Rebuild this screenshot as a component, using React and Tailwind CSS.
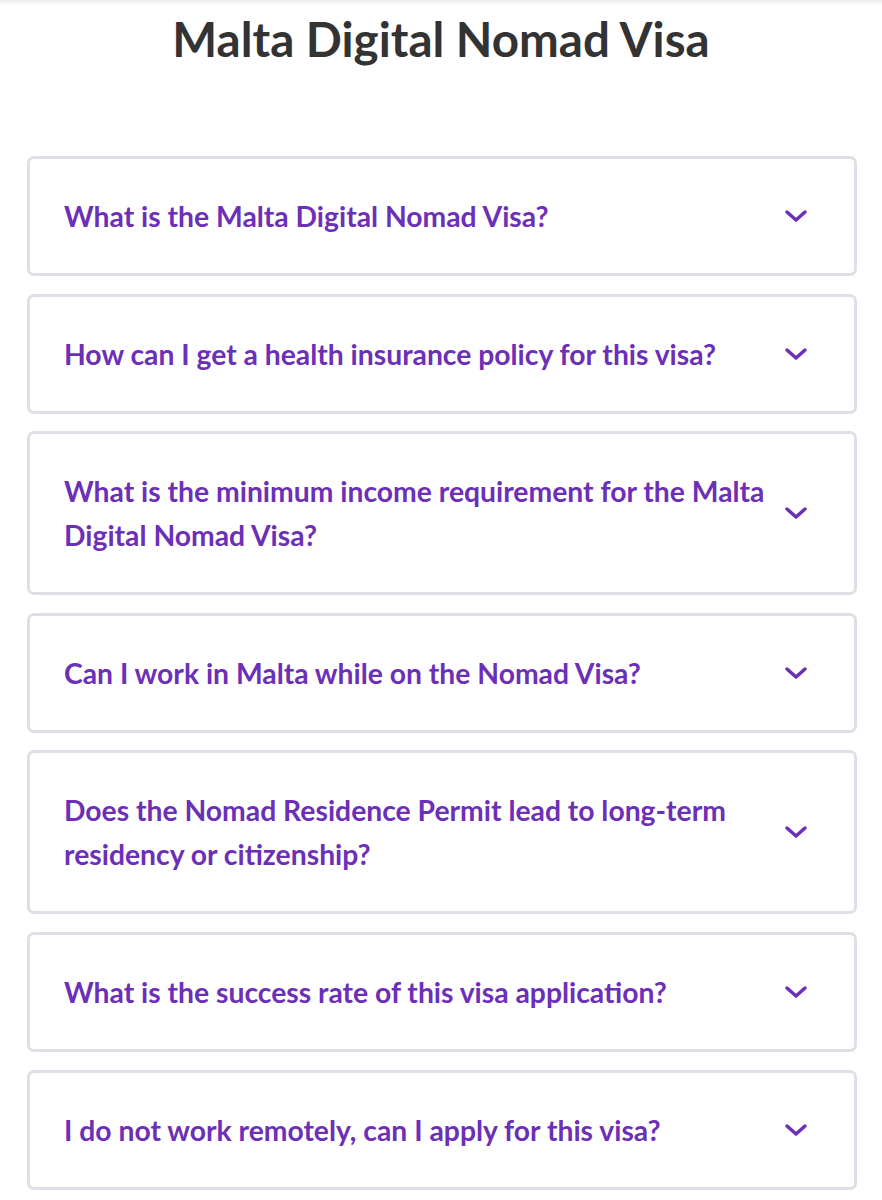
import React from 'react'

const questions = [
  'What is the Malta Digital Nomad Visa?',
  'How can I get a health insurance policy for this visa?',
  'What is the minimum income requirement for the Malta Digital Nomad Visa?',
  'Can I work in Malta while on the Nomad Visa?',
  'Does the Nomad Residence Permit lead to long-term residency or citizenship?',
  'What is the success rate of this visa application?',
  'I do not work remotely, can I apply for this visa?',
]

function Chevron() {
  return (
    <svg width="24" height="14" viewBox="0 0 24 14" fill="none" className="shrink-0">
      <polyline points="3,3 12,11 21,3" stroke="#6b2fb8" strokeWidth="3.5" strokeLinecap="round" strokeLinejoin="round" />
    </svg>
  )
}

function FaqItem({ question }) {
  return (
    <div className="flex items-center justify-between border-[3px] border-[#dedee6] rounded-[7px] bg-white pl-[34px] pr-[46px] py-[35px]">
      <h3 className="text-[28.3px] leading-[44px] font-bold text-[#6b2fb8] pr-[8px]">{question}</h3>
      <Chevron />
    </div>
  )
}

export default function App() {
  return (
    <div className="min-h-screen bg-white font-['Lato',sans-serif]">
      {/* faint shadow left by the header above */}
      <div className="h-[6px] bg-gradient-to-b from-[#ececee] to-white" />
      <h1 className="text-center text-[47.5px] leading-[58px] font-bold text-[#333333] mt-[4px]">
        Malta Digital Nomad Visa
      </h1>
      <div className="flex flex-col gap-[17.6px] pl-[27px] pr-[25px] mt-[88px] pb-[10px]">
        {questions.map((q) => (
          <FaqItem key={q} question={q} />
        ))}
      </div>
    </div>
  )
}
